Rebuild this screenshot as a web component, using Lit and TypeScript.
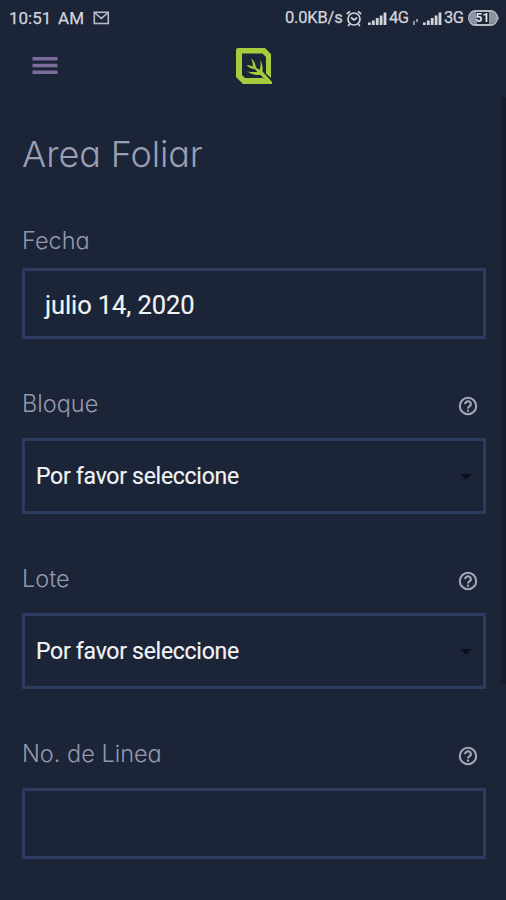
import { LitElement, html, css, nothing } from "lit";
import { customElement, property } from "lit/decorators.js";

const signal = () => html`<svg class="signal" width="19" height="13" viewBox="0 0 19 13">
  <path d="M0 10.5h2.8V13H0zM3.9 8.5h2.8V13H3.9zM7.8 6h2.8v7H7.8zM11.7 3.5h2.8V13h-2.8zM15.6 .5h2.8V13h-2.8z" fill="currentColor" />
</svg>`;

@customElement("status-bar")
class StatusBar extends LitElement {
  static styles = css`
    :host { display: flex; align-items: center; justify-content: space-between; height: 36px; box-sizing: border-box;
      padding: 0 6px 0 9px; font: 400 16.5px/36px Roboto, sans-serif; color: #d3d5db; -webkit-text-stroke: 0.25px #d3d5db; }
    .group { display: flex; align-items: center; white-space: pre; }
    svg { display: block; flex: none; }
    .time { width: 84px; font-size: 17px; letter-spacing: 0; word-spacing: 2.5px; }
    .rate { width: 61px; letter-spacing: -0.2px; }
    .alarm { margin-right: 6px; }
    .signal { margin: 0 2px 0 0; }
    .net { width: 22px; letter-spacing: -0.4px; }
    .mini { margin: 7px 5px 0 2px; }
    .battery { margin-left: 2px; }
  `;
  render() {
    return html`
      <div class="group">
        <span class="time">10:51 AM</span>
        <svg width="17" height="14" viewBox="0 0 17 14" fill="none" stroke="#b9bcc6" stroke-width="1.6">
          <rect x="1.3" y="1.3" width="14" height="11.2" /><path d="M2 2l6.3 5.4L14.6 2" />
        </svg>
      </div>
      <div class="group">
        <span class="rate">0.0KB/s</span>
        <svg class="alarm" width="16" height="17" viewBox="0 0 16 17" fill="none" stroke="currentColor" stroke-width="1.7">
          <circle cx="8" cy="9" r="6" /><path d="M.8 4L4 1.3M15.2 4L12 1.3M5 7.5l3 2.5 3-2.2M3.6 14L2.2 16M12.4 14l1.4 2" />
        </svg>
        ${signal()}<span class="net">4G</span>
        <svg class="mini" width="5" height="6" viewBox="0 0 5 6"><path d="M0 2h2v4H0zM3 0h2v3H3z" fill="#8f94a3" /></svg>
        ${signal()}<span class="net">3G</span>
        <svg class="battery" width="32" height="16" viewBox="0 0 32 16">
          <rect x="1" y="1" width="28" height="14" rx="6.5" fill="#1c2438" stroke="#b7bac3" stroke-width="1.8" />
          <path d="M8 2H7a6 6 0 0 0 0 12h2zM21 2h1.500a6 6 0 0 1 0 12H21z" fill="#8d92a0" />
          <path d="M30 5.5q1.6 2.5 0 5z" fill="#b7bac3" />
          <text x="14.5" y="12.3" text-anchor="middle" font-size="12" font-weight="700" font-family="Roboto" fill="#e4e5e9">51</text>
        </svg>
      </div>`;
  }
}

@customElement("form-field")
class FormField extends LitElement {
  @property() label = "";
  @property() value = "";
  @property() kind = "text";
  @property({ type: Boolean }) help = false;
  static styles = css`
    :host { display: block; }
    .head { display: flex; align-items: center; justify-content: space-between; height: 36px; padding-right: 8px; }
    .label { margin-top: 1px; font: 300 23.5px/36px Inter, sans-serif; font-feature-settings: "cv11", "ss03"; color: #9499ae; white-space: nowrap; }
    .help { display: block; margin-top: 6px; }
    .box { display: flex; align-items: center; justify-content: space-between; box-sizing: border-box; height: 71px; margin-top: 10px;
      border: 3px solid #2d3b60; padding: 2px 20px 0; color: #f2f3f5; font: 400 25.5px/30px Roboto, sans-serif; letter-spacing: -0.1px;
      -webkit-text-stroke: 0.15px #f2f3f5; }
    .select { height: 76px; padding: 2px 11px 0; font-size: 23px; letter-spacing: -0.28px; }
    .gap { margin-top: 17px; }
  `;
  render() {
    const select = this.kind === "select";
    return html`
      <div class="head">
        <span class="label">${this.label}</span>
        ${this.help
          ? html`<svg class="help" width="20" height="20" viewBox="0 0 20 20" fill="none" stroke="#a3a8b9" stroke-width="2.1">
              <circle cx="10" cy="10" r="8.2" />
              <path d="M7.1 8.2a2.9 2.7 0 1 1 4.6 2Q10 11.2 10 12.6" /><path d="M10 13.6v2.1" />
            </svg>`
          : nothing}
      </div>
      <div class="box ${select ? "select" : ""} ${this.help ? "gap" : ""}">
        <span>${this.value}</span>
        ${select ? html`<svg width="12" height="6" viewBox="0 0 12 6"><path d="M0 0h12L6 6z" fill="#0c121c" /></svg>` : nothing}
      </div>`;
  }
}

@customElement("app-root")
class AppRoot extends LitElement {
  static styles = css`
    :host { display: block; position: relative; height: 900px; overflow: hidden; background: #1c2438; }
    .bar { display: grid; grid-template-columns: 1fr auto 1fr; align-items: center; height: 61px; padding: 0 32px; }
    .bar svg { display: block; }
    .menu { margin-top: -2px; }
    .logo { margin: -2px 0 0 2px; }
    .scroll { position: absolute; right: 0; top: 97px; width: 5px; height: 587px; background: #161c2c; }
    .form { padding: 0 20px 0 22px; }
    h1 { margin: 0; padding-top: 33px; font: 300 36px/48px Inter, sans-serif; font-feature-settings: "cv11"; letter-spacing: -0.1px;
      color: #9a9fb2; white-space: nowrap; }
    .date { margin-top: 44px; height: 163px; }
    .row { height: 175.2px; }
  `;
  render() {
    return html`
      <status-bar></status-bar>
      <header class="bar">
        <svg class="menu" width="26" height="18" viewBox="0 0 26 18"><path d="M.5 0h25v3.4H.5zM.5 6.8h25v3.4H.5zM.5 13.6h25V17H.5z" fill="#7d6d9c" /></svg>
        <svg class="logo" width="36" height="36" viewBox="0 0 36 36" fill="#a6cb3c">
          <path fill-rule="evenodd" d="M2 0H29L35 6V30L30 25.500V9L26.500 5.500H6V27L9 30H27L35.500 36H7L0 29V2Q0 0 2 0z" />
          <path d="M10.500 17Q14 17 17 18.500Q17 14 15 10.500Q19 13 20 19.500L23.500 22Q25.500 17 24 11.500Q27.500 16 26.500 23.500L36 34V36H33L24.500 27Q17 27.500 11 23.500Q17 24.500 21.500 23.800L18.500 21Q14 21 10.500 17z" />
        </svg>
      </header>
      <main class="form">
        <h1>Area Foliar</h1>
        <form-field class="date" label="Fecha" value="julio 14, 2020"></form-field>
        <form-field class="row" label="Bloque" kind="select" value="Por favor seleccione" help></form-field>
        <form-field class="row" label="Lote" kind="select" value="Por favor seleccione" help></form-field>
        <form-field class="row" label="No. de Linea" help></form-field>
      </main>
      <div class="scroll"></div>`;
  }
}
